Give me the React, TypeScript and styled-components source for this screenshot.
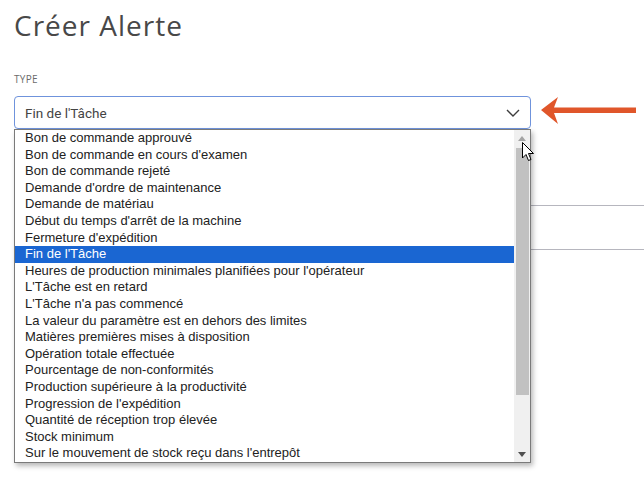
import React from "react";
import styled, { createGlobalStyle } from "styled-components";

const Global = createGlobalStyle`
  html, body { margin: 0; padding: 0; background: #fff; }
  body { width: 644px; height: 481px; overflow: hidden; }
`;

const Page = styled.div`
  position: relative;
  padding: 8px 0 0 14px;
  font-family: "Open Sans", "Liberation Sans", sans-serif;
`;

const Title = styled.h1`
  margin: 0;
  font-family: "Open Sans", sans-serif;
  font-weight: 400;
  font-size: 28px;
  line-height: 34px;
  letter-spacing: 1px;
  color: #484848;
`;

const Label = styled.div`
  margin-top: 31px;
  font-size: 10px;
  line-height: 12px;
  letter-spacing: 0.3px;
  color: #6b6b6b;
  text-transform: uppercase;
`;

const SelectRow = styled.div`
  margin-top: 11px;
  display: flex;
  align-items: center;
  gap: 10px;
`;

const SelectWrap = styled.div`
  position: relative;
  width: 517px;
`;

const SelectBox = styled.div`
  box-sizing: border-box;
  height: 33px;
  border: 1px solid #6f93dc;
  border-radius: 4px;
  display: flex;
  align-items: center;
  justify-content: space-between;
  padding: 0 10px 0 10px;
  font-family: "Roboto", sans-serif;
  font-size: 13.5px;
  color: #444;
  background: #fff;
`;

const Arrow = styled.svg`
  display: block;
  margin-top: -2px;
`;

const Below = styled.div`
  margin-top: 76px;
  display: flex;
  flex-direction: column;
`;

const Divider = styled.div<{ $h: number }>`
  height: ${(p) => p.$h}px;
  border-bottom: 1px solid #b6b6be;
`;

const Dropdown = styled.div`
  position: absolute;
  left: 0;
  top: 33px;
  box-sizing: border-box;
  width: 517px;
  height: 334px;
  border: 1px solid #7a7a7a;
  background: #fff;
  box-shadow: 2px 3px 5px rgba(0, 0, 0, 0.28);
  display: flex;
  z-index: 5;
`;

const List = styled.div`
  flex: 1;
  display: flex;
  flex-direction: column;
`;

const Item = styled.div<{ $active?: boolean }>`
  height: 16.6px;
  line-height: 16.6px;
  padding-left: 10px;
  font-family: "Liberation Sans", Arial, sans-serif;
  font-size: 13px;
  white-space: nowrap;
  color: ${(p) => (p.$active ? "#fff" : "#222")};
  background: ${(p) => (p.$active ? "#1a66d2" : "transparent")};
`;

const Scrollbar = styled.div`
  width: 16px;
  background: #f0f0f0;
  display: flex;
  flex-direction: column;
  align-items: center;
`;

const ScrollBtn = styled.div`
  height: 16px;
  width: 16px;
  display: flex;
  align-items: center;
  justify-content: center;
`;

const Thumb = styled.div`
  margin-top: 2px;
  width: 13px;
  height: 247px;
  background: #c1c1c1;
`;

const Cursor = styled.svg`
  position: absolute;
  left: 507px;
  top: 12px;
  z-index: 10;
`;

const items = [
  "Bon de commande approuvé",
  "Bon de commande en cours d'examen",
  "Bon de commande rejeté",
  "Demande d'ordre de maintenance",
  "Demande de matériau",
  "Début du temps d'arrêt de la machine",
  "Fermeture d'expédition",
  "Fin de l'Tâche",
  "Heures de production minimales planifiées pour l'opérateur",
  "L'Tâche est en retard",
  "L'Tâche n'a pas commencé",
  "La valeur du paramètre est en dehors des limites",
  "Matières premières mises à disposition",
  "Opération totale effectuée",
  "Pourcentage de non-conformités",
  "Production supérieure à la productivité",
  "Progression de l'expédition",
  "Quantité de réception trop élevée",
  "Stock minimum",
  "Sur le mouvement de stock reçu dans l'entrepôt",
];

export default function App() {
  return (
    <>
      <Global />
      <Page>
        <Title>Créer Alerte</Title>
        <Label>Type</Label>
        <SelectRow>
          <SelectWrap>
            <SelectBox>
              <span>Fin de l'Tâche</span>
              <svg width="14" height="8" viewBox="0 0 14 8">
                <path d="M1 1 L7 7 L13 1" fill="none" stroke="#3d3d3d" strokeWidth="1.4" />
              </svg>
            </SelectBox>
            <Dropdown>
              <List>
                {items.map((t) => (
                  <Item key={t} $active={t === "Fin de l'Tâche"}>
                    {t}
                  </Item>
                ))}
              </List>
              <Scrollbar>
                <ScrollBtn>
                  <svg width="8" height="5" viewBox="0 0 8 5">
                    <path d="M0 5 L4 0 L8 5 Z" fill="#a3a3a3" />
                  </svg>
                </ScrollBtn>
                <Thumb />
                <div style={{ flex: 1 }} />
                <ScrollBtn>
                  <svg width="8" height="5" viewBox="0 0 8 5">
                    <path d="M0 0 L8 0 L4 5 Z" fill="#505050" />
                  </svg>
                </ScrollBtn>
              </Scrollbar>
              <Cursor width="13" height="20" viewBox="0 0 13 20">
                <path
                  d="M0.5 0.5 L0.5 16 L4 12.5 L6.5 18.5 L9 17.5 L6.5 11.5 L11.5 11.5 Z"
                  fill="#fff"
                  stroke="#000"
                  strokeWidth="1"
                  strokeLinejoin="round"
                />
              </Cursor>
            </Dropdown>
          </SelectWrap>
          <Arrow width="96" height="30" viewBox="0 0 96 30">
            <path d="M0 13 L17 0 L13 10.5 L95 10.5 L95 16 L13 16 L17 27 Z" fill="#e0562a" />
          </Arrow>
        </SelectRow>
        <Below>
          <Divider $h={0} />
          <Divider $h={43} />
        </Below>
      </Page>
    </>
  );
}
